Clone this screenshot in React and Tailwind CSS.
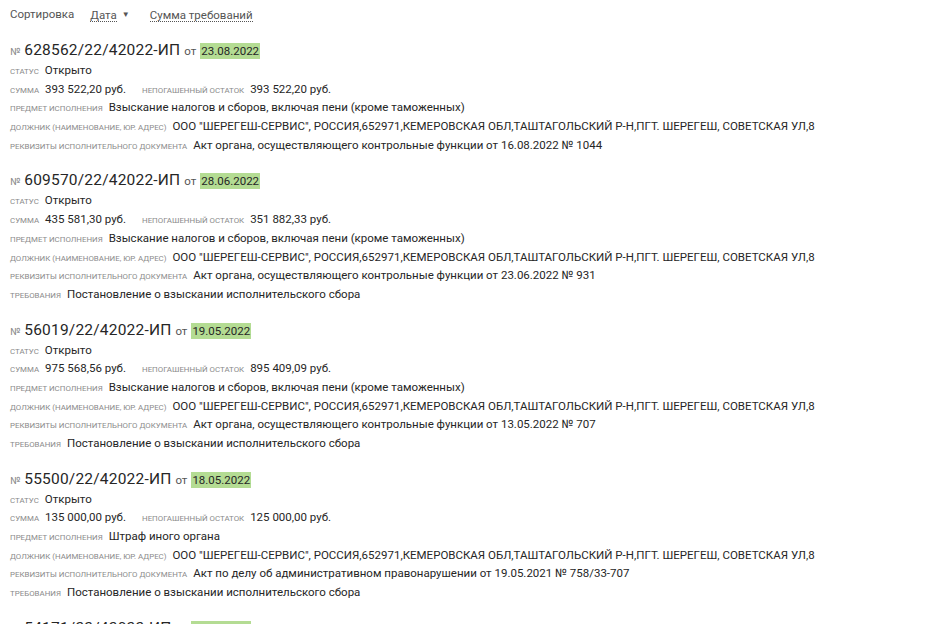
const debtor =
  'ООО "ШЕРЕГЕШ-СЕРВИС", РОССИЯ,652971,КЕМЕРОВСКАЯ ОБЛ,ТАШТАГОЛЬСКИЙ Р-Н,ПГТ. ШЕРЕГЕШ, СОВЕТСКАЯ УЛ,8';
const fee = "Постановление о взыскании исполнительского сбора";

const cases = [
  {
    num: "628562/22/42022-ИП",
    date: "23.08.2022",
    sum: "393 522,20 руб.",
    rest: "393 522,20 руб.",
    subject: "Взыскание налогов и сборов, включая пени (кроме таможенных)",
    doc: "Акт органа, осуществляющего контрольные функции от 16.08.2022 № 1044",
  },
  {
    num: "609570/22/42022-ИП",
    date: "28.06.2022",
    sum: "435 581,30 руб.",
    rest: "351 882,33 руб.",
    subject: "Взыскание налогов и сборов, включая пени (кроме таможенных)",
    doc: "Акт органа, осуществляющего контрольные функции от 23.06.2022 № 931",
    req: fee,
  },
  {
    num: "56019/22/42022-ИП",
    date: "19.05.2022",
    sum: "975 568,56 руб.",
    rest: "895 409,09 руб.",
    subject: "Взыскание налогов и сборов, включая пени (кроме таможенных)",
    doc: "Акт органа, осуществляющего контрольные функции от 13.05.2022 № 707",
    req: fee,
  },
  {
    num: "55500/22/42022-ИП",
    date: "18.05.2022",
    sum: "135 000,00 руб.",
    rest: "125 000,00 руб.",
    subject: "Штраф иного органа",
    doc: "Акт по делу об административном правонарушении от 19.05.2021 № 758/33-707",
    req: fee,
  },
  {
    num: "54171/22/42022-ИП",
    date: "16.05.2022",
  },
];

const Label = ({ children }) => (
  <span className="text-[7.9px] uppercase text-[#8a8a8a] mr-[6px]">{children}</span>
);

const Row = ({ label, children }) => (
  <div className="h-[18.7px] leading-[18.7px] whitespace-nowrap">
    <Label>{label}</Label>
    <span className="text-[11.5px] text-[#262626]">{children}</span>
  </div>
);

const CaseItem = ({ c }) => (
  <div className="mb-[16px]">
    <div className="h-[21px] leading-[21px] whitespace-nowrap">
      <span className="text-[10px] text-[#8a8a8a] mr-[4px]">№</span>
      <span className="text-[15.5px] text-[#262626] tracking-[0.2px]">{c.num}</span>
      <span className="text-[11.5px] text-[#555] mx-[4px]">от</span>
      <span className="text-[11.5px] text-[#262626] bg-[#b4dc93] px-[1px] py-[1px]">{c.date}</span>
    </div>
    {c.sum && (
      <>
        <Row label="Статус">Открыто</Row>
        <div className="h-[18.7px] leading-[18.7px] whitespace-nowrap">
          <Label>Сумма</Label>
          <span className="text-[11.5px] text-[#262626] mr-[16px]">{c.sum}</span>
          <Label>Непогашенный остаток</Label>
          <span className="text-[11.5px] text-[#262626]">{c.rest}</span>
        </div>
        <Row label="Предмет исполнения">{c.subject}</Row>
        <Row label="Должник (наименование, юр. адрес)">{debtor}</Row>
        <Row label="Реквизиты исполнительного документа">{c.doc}</Row>
        {c.req && <Row label="Требования">{c.req}</Row>}
      </>
    )}
  </div>
);

export default function App() {
  return (
    <div className="h-[624px] overflow-hidden bg-white px-[10px] pt-[5px] font-['Roboto',sans-serif]">
      <div className="h-[20px] flex items-center text-[11.5px] text-[#555] mb-[14px]">
        <span className="mr-[16px]">Сортировка</span>
        <span className="border-b border-dotted border-[#555] leading-[12px] mr-[5px]">Дата</span>
        <span className="text-[8px] mr-[20px]">▼</span>
        <span className="border-b border-dotted border-[#555] leading-[12px]">Сумма требований</span>
      </div>
      {cases.map((c) => (
        <CaseItem key={c.num} c={c} />
      ))}
    </div>
  );
}
